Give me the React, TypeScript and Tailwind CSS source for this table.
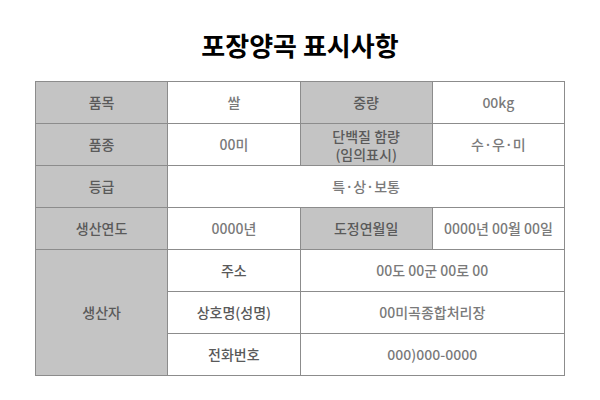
const font = { fontFamily: '"Noto Sans CJK KR", "Noto Sans", sans-serif' };

const th = "bg-[#c4c4c4] text-[#5a5a5a]";
const td = "bg-white text-[#7a7a7a]";
const cell = "border border-[#8c8c8c] h-[42px] text-center align-middle text-[14px] font-medium p-0";

export default function App() {
  return (
    <div className="w-[600px] h-[400px] bg-white" style={font}>
      <h1 className="pt-[28px] mb-[19px] text-center text-[26px] leading-[34px] font-bold text-black">
        포장양곡 표시사항
      </h1>
      <table className="mx-auto w-[530px] table-fixed border-collapse">
        <tbody>
          <tr>
            <td className={`${cell} ${th}`}>품목</td>
            <td className={`${cell} ${td}`}>쌀</td>
            <td className={`${cell} ${th}`}>중량</td>
            <td className={`${cell} ${td}`}>00kg</td>
          </tr>
          <tr>
            <td className={`${cell} ${th}`}>품종</td>
            <td className={`${cell} ${td}`}>00미</td>
            <td className={`${cell} ${th} leading-[18px]`}>
              <div>단백질 함량</div>
              <div>(임의표시)</div>
            </td>
            <td className={`${cell} ${td}`}>수·우·미</td>
          </tr>
          <tr>
            <td className={`${cell} ${th}`}>등급</td>
            <td className={`${cell} ${td}`} colSpan={3}>
              특·상·보통
            </td>
          </tr>
          <tr>
            <td className={`${cell} ${th}`}>생산연도</td>
            <td className={`${cell} ${td}`}>0000년</td>
            <td className={`${cell} ${th}`}>도정연월일</td>
            <td className={`${cell} ${td}`}>0000년 00월 00일</td>
          </tr>
          <tr>
            <td className={`${cell} ${th}`} rowSpan={3}>
              생산자
            </td>
            <td className={`${cell} bg-white text-[#5a5a5a]`}>주소</td>
            <td className={`${cell} ${td}`} colSpan={2}>
              00도 00군 00로 00
            </td>
          </tr>
          <tr>
            <td className={`${cell} bg-white text-[#5a5a5a]`}>상호명(성명)</td>
            <td className={`${cell} ${td}`} colSpan={2}>
              00미곡종합처리장
            </td>
          </tr>
          <tr>
            <td className={`${cell} bg-white text-[#5a5a5a]`}>전화번호</td>
            <td className={`${cell} ${td}`} colSpan={2}>
              000)000-0000
            </td>
          </tr>
        </tbody>
      </table>
    </div>
  );
}
